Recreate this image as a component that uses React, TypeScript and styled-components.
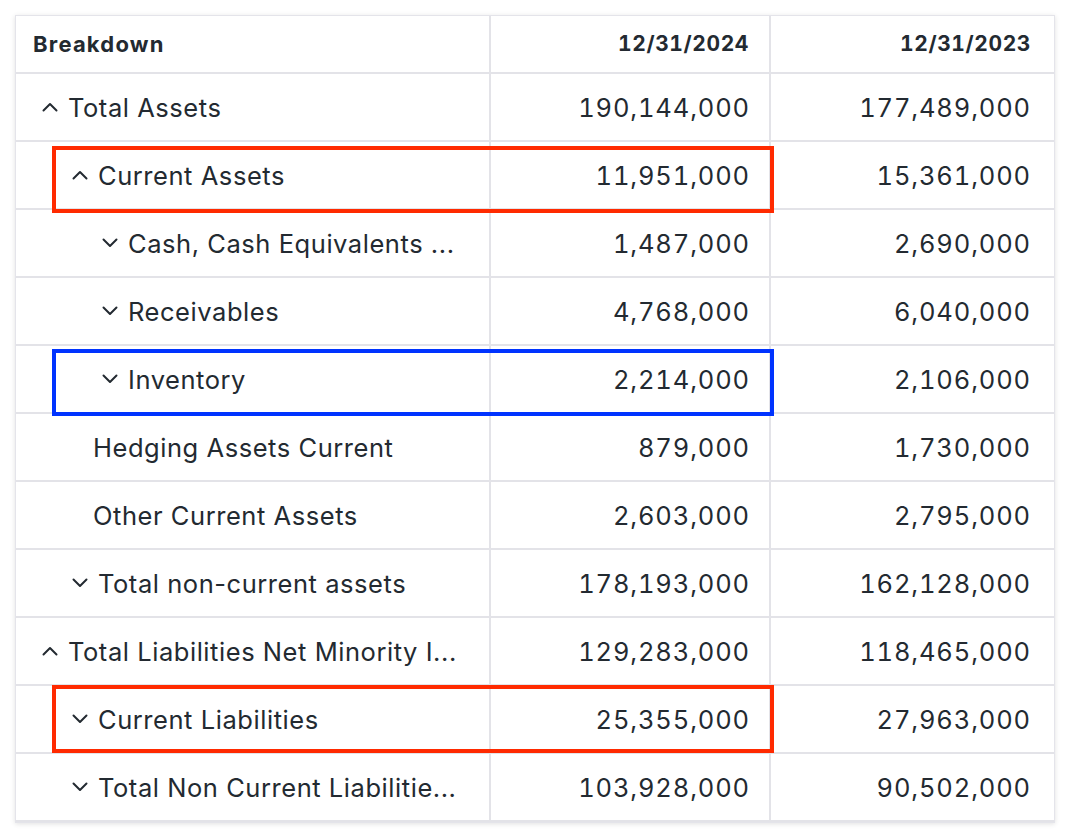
import React from "react";
import styled, { createGlobalStyle } from "styled-components";

const Global = createGlobalStyle`
  html, body { margin: 0; padding: 0; background: #ffffff; }
  body { font-family: Inter, "Noto Sans", "Liberation Sans", sans-serif; color: #232a31; }
`;

const Page = styled.div`
  position: relative;
  width: 1070px;
  height: 834px;
  padding: 15px 0 0 15px;
  box-sizing: border-box;
`;

const Card = styled.div`
  width: 1038px;
  background: #fff;
  border: 1px solid #e4e4ea;
  box-shadow: 0 1px 5px rgba(0, 0, 0, 0.12);
  display: grid;
  grid-template-columns: 475px 280px 1fr;
`;

const HeadCell = styled.div<{ $right?: boolean; $last?: boolean }>`
  height: 58px;
  box-sizing: border-box;
  display: flex;
  align-items: center;
  justify-content: ${(p) => (p.$right ? "flex-end" : "flex-start")};
  padding: ${(p) => (p.$right ? `0 ${p.$last ? 23 : 20}px 1px 0` : "0 0 1px 17px")};
  border-right: ${(p) => (p.$last ? "none" : "2px solid #e3e3e8")};
  border-bottom: 2px solid #e3e3e8;
  font-size: ${(p) => (p.$right ? "21px" : "22px")};
  font-weight: 700;
  letter-spacing: ${(p) => (p.$right ? "0.6px" : "1.2px")};
  font-variant-numeric: tabular-nums;
  color: #232a31;
`;

const LabelCell = styled.div<{ $indent: number }>`
  height: 68px;
  box-sizing: border-box;
  display: flex;
  align-items: center;
  padding-left: ${(p) => p.$indent}px;
  border-right: 2px solid #e3e3e8;
  border-bottom: 2px solid #e3e3e8;
  font-size: 25.5px;
  letter-spacing: 0.55px;
  white-space: nowrap;
  overflow: hidden;
`;

const ValueCell = styled.div<{ $last?: boolean }>`
  height: 68px;
  box-sizing: border-box;
  display: flex;
  align-items: center;
  justify-content: flex-end;
  padding-right: ${(p) => (p.$last ? 23 : 19)}px;
  border-right: ${(p) => (p.$last ? "none" : "2px solid #e3e3e8")};
  border-bottom: 2px solid #e3e3e8;
  font-size: 25.5px;
  font-variant-numeric: tabular-nums;
  letter-spacing: 0.85px;
`;

const Chevron = styled.svg`
  width: 16px;
  height: 16px;
  margin-right: 10px;
  flex: none;
`;

const Highlight = styled.div<{ $color: string }>`
  position: absolute;
  left: 52px;
  width: 722px;
  box-sizing: border-box;
  border: 4px solid ${(p) => p.$color};
  pointer-events: none;
`;

type Row = {
  label: string;
  indent: number;
  chev?: "up" | "down";
  a: string;
  b: string;
};

const rows: Row[] = [
  { label: "Total Assets", indent: 26, chev: "up", a: "190,144,000", b: "177,489,000" },
  { label: "Current Assets", indent: 56, chev: "up", a: "11,951,000", b: "15,361,000" },
  { label: "Cash, Cash Equivalents ...", indent: 86, chev: "down", a: "1,487,000", b: "2,690,000" },
  { label: "Receivables", indent: 86, chev: "down", a: "4,768,000", b: "6,040,000" },
  { label: "Inventory", indent: 86, chev: "down", a: "2,214,000", b: "2,106,000" },
  { label: "Hedging Assets Current", indent: 77, a: "879,000", b: "1,730,000" },
  { label: "Other Current Assets", indent: 77, a: "2,603,000", b: "2,795,000" },
  { label: "Total non-current assets", indent: 56, chev: "down", a: "178,193,000", b: "162,128,000" },
  { label: "Total Liabilities Net Minority I...", indent: 26, chev: "up", a: "129,283,000", b: "118,465,000" },
  { label: "Current Liabilities", indent: 56, chev: "down", a: "25,355,000", b: "27,963,000" },
  { label: "Total Non Current Liabilitie...", indent: 56, chev: "down", a: "103,928,000", b: "90,502,000" },
];

function ChevronIcon({ dir }: { dir: "up" | "down" }) {
  return (
    <Chevron viewBox="0 0 16 16">
      <path
        d={dir === "up" ? "M1.5 11.5 L8 5 L14.5 11.5" : "M1.5 4.5 L8 11 L14.5 4.5"}
        fill="none"
        stroke="#232a31"
        strokeWidth="2"
        strokeLinecap="round"
        strokeLinejoin="round"
      />
    </Chevron>
  );
}

export default function App() {
  return (
    <Page>
      <Global />
      <Card>
        <HeadCell>Breakdown</HeadCell>
        <HeadCell $right>12/31/2024</HeadCell>
        <HeadCell $right $last>12/31/2023</HeadCell>
        {rows.map((r) => (
          <React.Fragment key={r.label}>
            <LabelCell $indent={r.indent}>
              {r.chev && <ChevronIcon dir={r.chev} />}
              {r.label}
            </LabelCell>
            <ValueCell>{r.a}</ValueCell>
            <ValueCell $last>{r.b}</ValueCell>
          </React.Fragment>
        ))}
      </Card>
      <Highlight $color="#ff2a00" style={{ top: 146, height: 67 }} />
      <Highlight $color="#0033ff" style={{ top: 349, height: 67 }} />
      <Highlight $color="#ff2a00" style={{ top: 685, height: 68 }} />
    </Page>
  );
}
